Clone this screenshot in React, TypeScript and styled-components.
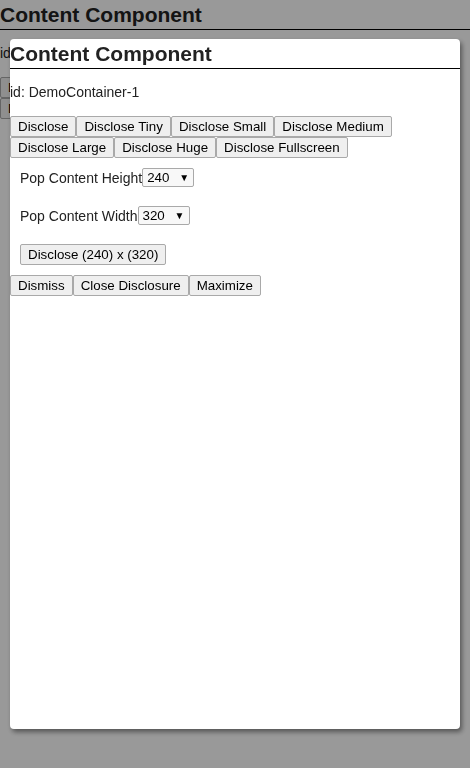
import React from "react";
import styled, { createGlobalStyle } from "styled-components";

const Global = createGlobalStyle`
  html, body { margin: 0; padding: 0; }
  body {
    background: #ffffff;
    font-family: "Liberation Sans", Arial, sans-serif;
    font-size: 14px;
    color: #222;
  }
`;

const Page = styled.div`
  width: 470px;
  height: 768px;
  overflow: hidden;
`;

const Panel = styled.div`
  display: flex;
  flex-direction: column;
`;

const Title = styled.h2`
  margin: 0;
  padding: 3px 0 2px;
  font-size: 21px;
  font-weight: bold;
  line-height: 24px;
  border-bottom: 1px solid #000;
`;

const IdLine = styled.p`
  margin: 15px 0 16px;
  line-height: 16px;
`;

const ButtonRow = styled.div`
  display: flex;
  flex-wrap: wrap;
`;

const Btn = styled.button`
  font-family: "Liberation Sans", Arial, sans-serif;
  font-size: 13.333px;
  line-height: 15px;
  color: #000;
  background: #efefef;
  border: 1px solid #a9a9a9;
  border-radius: 2px;
  padding: 2px 7px;
  margin: 0;
`;

const Section = styled.div`
  display: flex;
  flex-direction: column;
  align-items: flex-start;
  gap: 19px;
  padding: 10px;
`;

const Field = styled.label`
  display: flex;
  align-items: center;
  line-height: 16px;
`;

const SelectWrap = styled.span`
  position: relative;
  display: inline-flex;
  &::after {
    content: "▼";
    position: absolute;
    right: 5px;
    top: 50%;
    transform: translateY(-50%);
    font-size: 10px;
    line-height: 10px;
    color: #000;
    pointer-events: none;
  }
`;

const Select = styled.select`
  appearance: none;
  -webkit-appearance: none;
  box-sizing: border-box;
  width: 52px;
  height: 19px;
  font-family: "Liberation Sans", Arial, sans-serif;
  font-size: 13.333px;
  color: #000;
  background: #f8f8f8;
  border: 1px solid #a9a9a9;
  border-radius: 2px;
  padding: 0 16px 0 4px;
  margin: 0;
`;

const Overlay = styled.div`
  position: fixed;
  inset: 0;
  background: rgba(0, 0, 0, 0.4);
`;

const Modal = styled.div`
  position: fixed;
  left: 10px;
  top: 39px;
  width: 450px;
  height: 690px;
  background: #fff;
  border-radius: 4px;
  box-shadow: 2px 3px 5px rgba(0, 0, 0, 0.45);
  overflow: hidden;
`;

const sizes = ["Disclose", "Disclose Tiny", "Disclose Small", "Disclose Medium", "Disclose Large", "Disclose Huge", "Disclose Fullscreen"];

function ContentComponent({ disclosed }: { disclosed: boolean }) {
  return (
    <Panel>
      <Title>Content Component</Title>
      <IdLine>id: DemoContainer-1</IdLine>
      <ButtonRow>
        {sizes.map((s) => (
          <Btn key={s}>{s}</Btn>
        ))}
      </ButtonRow>
      <Section>
        <Field>
          Pop Content Height
          <SelectWrap>
            <Select defaultValue="240">
              <option>120</option>
              <option>240</option>
              <option>480</option>
            </Select>
          </SelectWrap>
        </Field>
        <Field>
          Pop Content Width
          <SelectWrap>
            <Select defaultValue="320">
              <option>160</option>
              <option>320</option>
              <option>640</option>
            </Select>
          </SelectWrap>
        </Field>
        <Btn>Disclose (240) x (320)</Btn>
      </Section>
      {disclosed && (
        <ButtonRow>
          <Btn>Dismiss</Btn>
          <Btn>Close Disclosure</Btn>
          <Btn>Maximize</Btn>
        </ButtonRow>
      )}
    </Panel>
  );
}

export default function App() {
  return (
    <Page>
      <Global />
      <ContentComponent disclosed={false} />
      <Overlay />
      <Modal>
        <ContentComponent disclosed={true} />
      </Modal>
    </Page>
  );
}
